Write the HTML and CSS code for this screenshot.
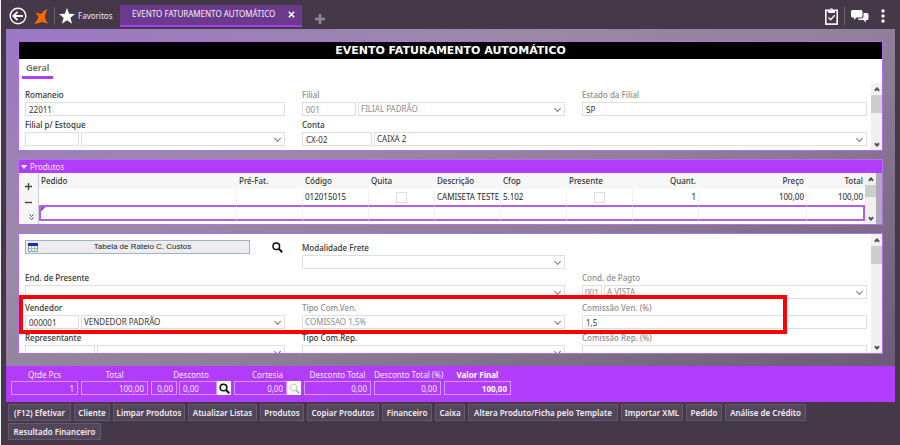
FILE: index.html
```html
<!DOCTYPE html>
<html lang="pt-BR">
<head>
<meta charset="utf-8">
<title>Evento Faturamento Automático</title>
<link rel="stylesheet" href="styles.css">
</head>
<body>
<div class="app">
  <header class="topbar">
    <button class="icon-btn back" aria-label="Voltar"><svg width="18" height="18" viewBox="0 0 18 18" fill="none" stroke="#fff"><circle cx="9" cy="9" r="7.8" stroke-width="1.4"/><path d="M14 9H4.5M8.500 4.800L4.300 9l4.200 4.200" stroke-width="1.800"/></svg></button>
    <svg class="logo" width="14" height="15" viewBox="0 0 14 15" fill="#ff6a00"><path d="M13.500 0C12 .5 9.500 2 7 5L1 3.500C2.500 5 3.800 6.200 4.500 8C3.800 10.500 2.300 12.500 0 14.800C3.500 14.300 6 13.800 8 13L14 14.500C12.500 12.500 11.500 11 11 8.500C10.800 5.500 12 3 13.500 0Z"/></svg>
    <span class="divider"></span>
    <a class="favorites" href="#"><svg width="16" height="16" viewBox="0 0 15 15" fill="#fff"><path d="M7.500 0l2 5.300 5.500.3-4.300 3.500 1.500 5.700-4.700-3.200-4.700 3.200 1.500-5.700L0 5.600l5.500-.3z"/></svg>Favoritos</a>
    <div class="tab"><span>EVENTO FATURAMENTO AUTOMÁTICO</span><button class="icon-btn" aria-label="Fechar"><svg width="7" height="7" viewBox="0 0 7 7" stroke="#fff" stroke-width="1.600"><path d="M.8.8l5.400 5.400M6.200.8L.8 6.200"/></svg></button></div>
    <button class="icon-btn add" aria-label="Nova aba"><svg width="10" height="10" viewBox="0 0 10 10" stroke="#8c8790" stroke-width="2.600"><path d="M5 0v10M0 5h10"/></svg></button>
    <div class="tools">
      <button class="icon-btn" aria-label="Tarefas"><svg width="13" height="17" viewBox="0 0 13 17" fill="none" stroke="#fff"><rect x=".8" y="2.300" width="11.400" height="13.800" stroke-width="1.600"/><path d="M3.500 2.500h6v2h-6z" fill="#fff"/><circle cx="6.500" cy="1.500" r="1"/><path d="M3.500 9.500l2.200 2.200 4-4.500" stroke-width="1.300"/></svg></button>
      <span class="divider"></span>
      <button class="icon-btn" aria-label="Mensagens"><svg width="18" height="14" viewBox="0 0 18 14" fill="#fff"><path d="M1.500 1h8.500q1.500 0 1.500 1.500v4.500q0 1.500-1.500 1.500H5.500L3 11V8.500H1.500Q0 8.500 0 7V2.500Q0 1 1.500 1z"/><path d="M12.500 4h3.500q1.500 0 1.500 1.500v4q0 1.500-1.500 1.500h-1v2.500L12.500 11H8.500Q7 11 7 9.500h3.500q2 0 2-2z"/></svg></button>
      <button class="icon-btn dots" aria-label="Mais"><svg width="4" height="14" viewBox="0 0 4 14" fill="#fff"><circle cx="2" cy="2" r="1.700"/><circle cx="2" cy="7" r="1.700"/><circle cx="2" cy="12" r="1.700"/></svg></button>
    </div>
  </header>

  <main class="work">
    <section class="panel">
      <h1>EVENTO FATURAMENTO AUTOMÁTICO</h1>
      <nav class="subtabs"><a href="#">Geral</a></nav>
      <div class="scroller">
        <div class="form">
          <div class="field"><label for="romaneio">Romaneio</label><input id="romaneio" value="22011"></div>
          <div class="field dim"><label for="filial">Filial</label><div class="pair"><input id="filial" value="001"><span class="sel"><select aria-label="Nome da filial"><option>FILIAL PADRÃO</option></select></span></div></div>
          <div class="field dim"><label for="estado">Estado da Filial</label><input id="estado" class="dark" value="SP"></div>
          <div class="field"><label for="estoque">Filial p/ Estoque</label><div class="pair"><input id="estoque"><span class="sel"><select aria-label="Nome da filial de estoque"><option></option></select></span></div></div>
          <div class="field span2"><label for="conta">Conta</label><div class="pair wide"><input id="conta" value="CX-02"><span class="sel"><select aria-label="Nome da conta"><option>CAIXA 2</option></select></span></div></div>
        </div>
        <div class="bar" aria-hidden="true"><i class="up"></i><i class="thumb"></i><i class="down"></i></div>
      </div>
    </section>

    <section class="panel products">
      <h2><i class="caret"></i>Produtos</h2>
      <div class="grid-box">
        <div class="side">
          <button class="icon-btn" aria-label="Incluir"><svg width="7" height="7" viewBox="0 0 7 7" stroke="#444" stroke-width="1.400"><path d="M3.500 0v7M0 3.500h7"/></svg></button>
          <button class="icon-btn" aria-label="Excluir"><svg width="7" height="7" viewBox="0 0 7 7" stroke="#444" stroke-width="1.400"><path d="M0 3.500h7"/></svg></button>
          <button class="icon-btn more" aria-label="Expandir"><svg width="5" height="7" viewBox="0 0 5 7" fill="none" stroke="#444"><path d="M.5.5l2 2 2-2M.5 3.500l2 2 2-2"/></svg></button>
        </div>
        <table>
          <colgroup><col><col class="c1"><col class="c1"><col class="c1"><col class="c1"><col class="c1"><col class="c1"><col class="c1"><col class="c2"><col class="c3"></colgroup>
          <thead><tr><th>Pedido</th><th>Pré-Fat.</th><th>Código</th><th>Quita</th><th>Descrição</th><th>Cfop</th><th>Presente</th><th class="num">Quant.</th><th class="num">Preço</th><th class="num">Total</th></tr></thead>
          <tbody>
            <tr><td></td><td></td><td>012015015</td><td class="mid"><input type="checkbox" aria-label="Quita"></td><td>CAMISETA TESTE</td><td>5.102</td><td class="mid"><input type="checkbox" aria-label="Presente"></td><td class="num">1</td><td class="num">100,00</td><td class="num">100,00</td></tr>
            <tr class="current"><td></td><td></td><td></td><td></td><td></td><td></td><td></td><td></td><td></td><td></td></tr>
            <tr class="rest"><td></td><td></td><td></td><td></td><td></td><td></td><td></td><td></td><td></td><td></td></tr>
          </tbody>
        </table>
        <div class="bar" aria-hidden="true"><i class="up"></i><i class="thumb short"></i><i class="down"></i></div>
        <div class="edge"></div>
      </div>
    </section>

    <section class="panel details">
      <div class="scroller">
        <div class="form">
          <div class="action"><button class="wide-btn"><svg width="10" height="9" viewBox="0 0 10 9"><path fill="#f4f4f4" stroke="#8b9aa6" d="M.5.5h9v8h-9z"/><path fill="#2424c0" d="M0 0h10v3H0z"/><path stroke="#8fc0c0" d="M1 5.500h8M3.500 3v6M6.500 3v6"/></svg><span>Tabela de Rateio C. Custos</span></button><button class="icon-btn" aria-label="Pesquisar"><svg width="11" height="11" viewBox="0 0 11 11" fill="none" stroke="#111"><circle cx="4.300" cy="4.300" r="3.300" stroke-width="1.500"/><path d="M6.800 6.800l3.400 3.400" stroke-width="2"/></svg></button></div>
          <div class="field"><label for="frete">Modalidade Frete</label><span class="sel"><select id="frete"><option></option></select></span></div>
          <div></div>
          <div class="field span2"><label for="end">End. de Presente</label><span class="sel"><select id="end"><option></option></select></span></div>
          <div class="field dim"><label for="pagto">Cond. de Pagto</label><div class="pair tiny"><input id="pagto" value="001"><span class="sel"><select aria-label="Nome da condição"><option>A VISTA</option></select></span></div></div>
          <div class="field"><label for="vend">Vendedor</label><div class="pair"><input id="vend" value="000001"><span class="sel"><select aria-label="Nome do vendedor"><option>VENDEDOR PADRÃO</option></select></span></div></div>
          <div class="field dim"><label for="tipov">Tipo Com.Ven.</label><span class="sel"><select id="tipov"><option>COMISSAO 1,5%</option></select></span></div>
          <div class="field dim"><label for="comv">Comissão Ven. (%)</label><input id="comv" class="dark" value="1,5"></div>
          <div class="field"><label for="rep">Representante</label><div class="pair wide"><input id="rep"><span class="sel"><select aria-label="Nome do representante"><option></option></select></span></div></div>
          <div class="field"><label for="tipor">Tipo Com.Rep.</label><span class="sel"><select id="tipor"><option></option></select></span></div>
          <div class="field dim"><label for="comr">Comissão Rep. (%)</label><input id="comr"></div>
        </div>
        <div class="bar" aria-hidden="true"><i class="up"></i><i class="thumb"></i><i class="down"></i></div>
      </div>
      <div class="highlight"></div>
    </section>
  </main>

  <section class="totals">
    <div class="total w1"><label for="t1">Qtde Pcs</label><input id="t1" value="1"></div>
    <div class="total w1"><label for="t2">Total</label><input id="t2" value="100,00"></div>
    <div class="total w2"><label for="t3">Desconto</label><div class="combo"><input id="t3" class="pct" value="0,00"><div class="with-icon"><input class="start" aria-label="Valor do desconto" value="0,00"><button aria-label="Pesquisar desconto"><svg width="11" height="11" viewBox="0 0 11 11" fill="none" stroke="#111"><circle cx="4.500" cy="4.500" r="3.300" stroke-width="1.500"/><path d="M7 7l3.400 3.400" stroke-width="2"/></svg></button></div></div></div>
    <div class="total w1"><label for="t4">Cortesia</label><div class="with-icon"><input id="t4" value="0,00"><button aria-label="Pesquisar cortesia"><svg width="11" height="11" viewBox="0 0 11 11" fill="none" stroke="#aaa"><circle cx="4.500" cy="4.500" r="3.300" stroke-dasharray="2 1"/><path d="M7 7l3.400 3.400" stroke-width="1.500"/></svg></button></div></div>
    <div class="total w1"><label for="t5">Desconto Total</label><input id="t5" value="0,00"></div>
    <div class="total w1"><label for="t6">Desconto Total (%)</label><input id="t6" value="0,00"></div>
    <div class="total w1 strong"><label for="t7">Valor Final</label><input id="t7" value="100,00"></div>
  </section>

  <footer class="actions">
    <button class="b63">(F12) Efetivar</button><button class="b36">Cliente</button><button class="b72">Limpar Produtos</button><button class="b69">Atualizar Listas</button><button class="b44">Produtos</button><button class="b72">Copiar Produtos</button><button class="b50">Financeiro</button><button class="b30">Caixa</button><button class="b150">Altera Produto/Ficha pelo Template</button><button class="b62">Importar XML</button><button class="b36">Pedido</button><button class="b81">Análise de Crédito</button><button class="b93">Resultado Financeiro</button>
  </footer>
</div>
</body>
</html>
```
FILE: styles.css
```css
* { box-sizing: border-box; }
body {
  margin: 0;
  background: #443849;
  color: #333;
  font: 8px/12px "Noto Sans", "Open Sans", sans-serif;
}
button, input, select { font: inherit; color: inherit; margin: 0; border-radius: 0; }
input, select { min-width: 0; width: 100%; height: 14px; padding: 0 3px; border: 1px solid #dedede; background: #fff; outline: 0; appearance: none; display: block; }
svg { display: block; flex: none; }
.app { height: 100vh; display: flex; flex-direction: column; border-left: 1px solid #eee; }
.icon-btn { border: 0; padding: 0; background: none; display: grid; place-items: center; }

/* Top bar */
.topbar { display: flex; align-items: center; height: 29px; padding: 3px 15px 0 8px; color: #f0edf2; }
.logo { margin-left: 7px; }
.divider { width: 1px; height: 18px; background: #6d6572; }
.topbar > .divider { margin: 0 4px 0 6px; }
.favorites { display: flex; align-items: center; gap: 3px; width: 61px; color: inherit; text-decoration: none; }
.tab { align-self: flex-start; display: flex; align-items: center; justify-content: space-between; width: 182px; height: 22px; margin-top: 2px; padding: 0 7px 2px 12px; background: #6c3a8c; border-bottom: 2px solid #ab3cf8; white-space: nowrap; color: #f6effa; }
.add { margin: 6px 0 0 13px; }
.tools { margin-left: auto; display: flex; align-items: center; gap: 6px; }
.dots { margin-left: 6px; }

/* Work area */
.work { flex: 1; min-height: 0; display: flex; flex-direction: column; gap: 8px; margin: 0 5px; padding: 12px; background: linear-gradient(155deg, #9b78c6 0%, #9a8aa6 32%, #8d7d97 60%, #6c5b77 100%); }
.panel { position: relative; border: 1px solid #b66bf0; background: #fff; }
h1 { margin: 0; height: 17px; background: #000; color: #fff; font: bold 11px/17px "DejaVu Sans", sans-serif; text-align: center; }
.subtabs { height: 24px; padding-left: 3px; }
.subtabs a { display: inline-block; height: 20px; padding: 3px 4px 0; border-bottom: 3px solid #b13cfb; color: #666; font-weight: 600; font-size: 9px; text-decoration: none; }
.scroller { display: flex; }
.form { flex: 1; min-width: 0; display: grid; grid-template-columns: 260fr 263fr 285fr; column-gap: 17px; grid-auto-rows: 30px; padding: 4px 4px 3px 6px; }
.field label { display: block; height: 15px; line-height: 15px; font-weight: 500; white-space: nowrap; }
.span2 { grid-column: span 2; }
.dim { color: #8c8c8c; }
.dark { color: #333; }
.pair { display: grid; grid-template-columns: 54px 1fr; gap: 2px; }
.wide { grid-template-columns: 70px 1fr; }
.tiny { grid-template-columns: 20px 1fr; }
.tiny input { padding: 0 2px; }
.sel { position: relative; display: block; min-width: 0; }
.sel select { padding: 0 2px; }
.sel::after { content: ""; position: absolute; right: 5px; top: 4px; width: 4px; height: 4px; border: solid #777; border-width: 0 1px 1px 0; transform: rotate(45deg); }

/* Scroll bars */
.bar { width: 11px; flex: none; display: flex; flex-direction: column; align-items: center; background: #f0f0f0; }
.up, .down { width: 4px; height: 4px; border: solid #555; border-width: 2px 0 0 2px; transform: rotate(45deg); margin: 5px 0 3px; flex: none; }
.down { border-width: 0 2px 2px 0; margin: auto 0 4px; }
.thumb { width: 11px; height: 18px; background: #cdcdcd; flex: none; }
.short { height: 12px; }

/* Products grid */
h2 { margin: 0; height: 13px; padding-left: 2px; display: flex; align-items: center; gap: 3px; background: #b13cfb; color: #f6e6ff; font-size: 8px; font-weight: 400; }
.caret { border: solid transparent; border-width: 4px 3px 0; border-top-color: #fff; }
.grid-box { display: flex; }
.side { width: 20px; flex: none; background: #f6f6f6; border-right: 1px solid #ccc; display: flex; flex-direction: column; align-items: center; justify-content: space-between; padding: 10px 0 3px; }
.more { align-self: flex-end; margin-right: 4px; }
table { flex: 1; width: 0; table-layout: fixed; border-collapse: separate; border-spacing: 0; }
th, td { padding: 0 2px; height: 16px; line-height: 14px; text-align: left; font-weight: 500; white-space: nowrap; border-left: 1px solid #f2f2f2; }
th { background: #f7f7f7; border-color: #f7f7f7; }
th:first-child, td:first-child { border-left: 0; }
td { font-weight: 400; color: #222; }
.num { text-align: right; }
.c1 { width: 66px; }
.c2 { width: 108px; }
.c3 { width: 59px; }
.mid input { width: 11px; height: 11px; margin: 0 auto; padding: 0; }
.current td { border-top: 2px solid #b45cf0; border-bottom: 2px solid #b45cf0; height: 16px; }
.current td:first-child { border-left: 2px solid #b45cf0; background: linear-gradient(135deg, #b13cfb 3px, #fff 3px); }
.current td:last-child { border-right: 2px solid #b45cf0; }
.rest td { height: 3px; line-height: 0; }
.edge { width: 6px; background: #b1a8b8; }

/* Detail form */
.details { flex: 1; min-height: 0; overflow: hidden; }
.details .scroller { height: 100%; }
.details .form { overflow: hidden; padding-top: 6px; }
.action { display: flex; align-items: flex-start; gap: 22px; }
.action .icon-btn { margin-top: 2px; }
.wide-btn { display: flex; align-items: center; flex: 0 1 225px; height: 14px; padding: 0 2px; border: 1px solid #9fb3c4; background: #ececee; font: 8px/12px "Liberation Sans", sans-serif; color: #222; }
.wide-btn span { flex: 1; }
.highlight { position: absolute; left: 0; top: 61px; width: 89%; height: 39px; border: 4px solid #f00; pointer-events: none; }

/* Totals */
.totals { display: flex; gap: 3px; margin: 0 5px; height: 36px; padding: 2px 5px 0; background: #b13cfb; color: #f6e6ff; }
.total label { display: block; height: 13px; line-height: 14px; text-align: center; white-space: nowrap; }
.total input { background: none; border-color: #d597ff; text-align: right; }
.total .start { text-align: left; }
.w1 { width: 67px; }
.w2 { width: 80px; }
.combo { display: grid; grid-template-columns: 26px 1fr; gap: 2px; }
.with-icon { display: flex; }
.with-icon button { width: 14px; flex: none; border: 0; padding: 0; background: #f6f6f6; display: grid; place-items: center; }
.strong { color: #fff; font-weight: 700; }

/* Action buttons */
.actions { padding: 2px 5px 5px 7px; display: flex; flex-wrap: wrap; gap: 2px 3px; }
.actions button { height: 17px; padding: 0; border: 1px solid #655a6b; background: #51465a; color: #f2eff4; font-weight: 600; white-space: nowrap; }
.b30 { width: 30px; }
.b36 { width: 36px; }
.b44 { width: 44px; }
.b50 { width: 50px; }
.b62 { width: 62px; }
.b63 { width: 63px; }
.b69 { width: 69px; }
.b72 { width: 72px; }
.b81 { width: 81px; }
.b93 { width: 93px; }
.b150 { width: 150px; }
```
